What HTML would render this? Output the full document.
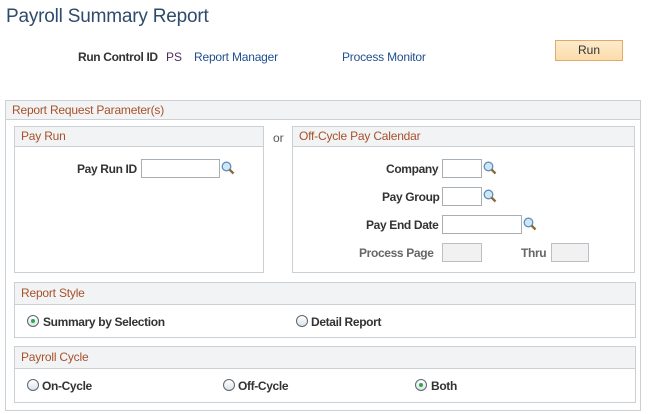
<!DOCTYPE html>
<html><head><style>
*{margin:0;padding:0;box-sizing:border-box}
body{width:648px;height:414px;background:#fff;font-family:"Liberation Sans",Arial,sans-serif;font-size:12px;color:#333;position:relative;overflow:hidden}
.a{position:absolute;white-space:nowrap}
.box{position:absolute;border:1px solid #cbd0d4;background:#fff}
.hd{position:absolute;left:0;right:0;top:0;background:#f1f3f4;border-bottom:1px solid #cbd0d4;color:#a8512a;font-size:12px;padding-left:6px;letter-spacing:-0.2px}
.lb{font-weight:bold;color:#333;letter-spacing:-0.35px}
.inp{position:absolute;border:1px solid #a7aeb4;background:#fff;height:19px}
.dis{background:#f1f1f1;border-color:#b9bfc4}
.lk{color:#1f4f8f;letter-spacing:-0.2px}
.r{position:absolute;width:12px;height:12px;border:1px solid #5a6670;border-radius:50%;background:linear-gradient(#fff,#dde3e8)}
.r.on::after{content:"";position:absolute;left:3px;top:3px;width:4px;height:4px;border-radius:50%;background:#2fa84a}
</style></head><body>
<div class="a" style="left:6px;top:6px;font-size:19px;letter-spacing:-0.2px;color:#2e4b6b">Payroll Summary Report</div>
<div class="a lb" style="left:78px;top:50px">Run Control ID</div>
<div class="a" style="left:166px;top:50px;color:#4c2c5a">PS</div>
<div class="a lk" style="left:194px;top:50px">Report Manager</div>
<div class="a lk" style="left:342px;top:50px">Process Monitor</div>
<div class="a" style="left:555px;top:40px;width:68px;height:21px;background:linear-gradient(#fdebcc,#fbdcaa);border:1px solid #e2a86c;text-align:center;line-height:19px;color:#333">Run</div>

<div class="box" style="left:5px;top:100px;width:636px;height:311px">
 <div class="hd" style="height:19px;line-height:18px">Report Request Parameter(s)</div>
</div>
<div class="box" style="left:14px;top:126px;width:250px;height:147px">
 <div class="hd" style="height:20px;line-height:19px">Pay Run</div>
</div>
<div class="a" style="left:273px;top:131px;color:#555">or</div>
<div class="box" style="left:292px;top:126px;width:343px;height:147px">
 <div class="hd" style="height:20px;line-height:19px">Off-Cycle Pay Calendar</div>
</div>

<div class="a lb" style="left:77px;top:162px">Pay Run ID</div>
<div class="inp" style="left:141px;top:159px;width:79px"></div>

<div class="a lb" style="left:386px;top:162px">Company</div>
<div class="inp" style="left:442px;top:159px;width:40px"></div>
<div class="a lb" style="left:382px;top:190px">Pay Group</div>
<div class="inp" style="left:442px;top:187px;width:40px"></div>
<div class="a lb" style="left:366px;top:218px">Pay End Date</div>
<div class="inp" style="left:442px;top:215px;width:80px"></div>
<div class="a lb" style="left:359px;top:246px;color:#666">Process Page</div>
<div class="inp dis" style="left:442px;top:243px;width:40px"></div>
<div class="a lb" style="left:521px;top:246px;color:#666">Thru</div>
<div class="inp dis" style="left:551px;top:243px;width:38px"></div>

<svg class="a" style="left:221px;top:161px" width="14" height="14"><circle cx="5.5" cy="5.5" r="4.3" fill="#cfe6f7" stroke="#5f8fb8" stroke-width="1.3"/><path d="M8.5 8.5l4 4" stroke="#8a6a3a" stroke-width="2.3"/></svg>
<svg class="a" style="left:483px;top:161px" width="14" height="14"><circle cx="5.5" cy="5.5" r="4.3" fill="#cfe6f7" stroke="#5f8fb8" stroke-width="1.3"/><path d="M8.5 8.5l4 4" stroke="#8a6a3a" stroke-width="2.3"/></svg>
<svg class="a" style="left:483px;top:189px" width="14" height="14"><circle cx="5.5" cy="5.5" r="4.3" fill="#cfe6f7" stroke="#5f8fb8" stroke-width="1.3"/><path d="M8.5 8.5l4 4" stroke="#8a6a3a" stroke-width="2.3"/></svg>
<svg class="a" style="left:523px;top:217px" width="14" height="14"><circle cx="5.5" cy="5.5" r="4.3" fill="#cfe6f7" stroke="#5f8fb8" stroke-width="1.3"/><path d="M8.5 8.5l4 4" stroke="#8a6a3a" stroke-width="2.3"/></svg>

<div class="box" style="left:14px;top:282px;width:622px;height:56px">
 <div class="hd" style="height:22px;line-height:21px">Report Style</div>
</div>
<div class="r on" style="left:27px;top:315px"></div>
<div class="a lb" style="left:43px;top:315px">Summary by Selection</div>
<div class="r" style="left:296px;top:315px"></div>
<div class="a lb" style="left:311px;top:315px">Detail Report</div>

<div class="box" style="left:14px;top:346px;width:622px;height:57px">
 <div class="hd" style="height:22px;line-height:21px">Payroll Cycle</div>
</div>
<div class="r" style="left:27px;top:379px"></div>
<div class="a lb" style="left:42px;top:379px">On-Cycle</div>
<div class="r" style="left:223px;top:379px"></div>
<div class="a lb" style="left:238px;top:379px">Off-Cycle</div>
<div class="r on" style="left:415px;top:379px"></div>
<div class="a lb" style="left:431px;top:379px">Both</div>
</body></html>
